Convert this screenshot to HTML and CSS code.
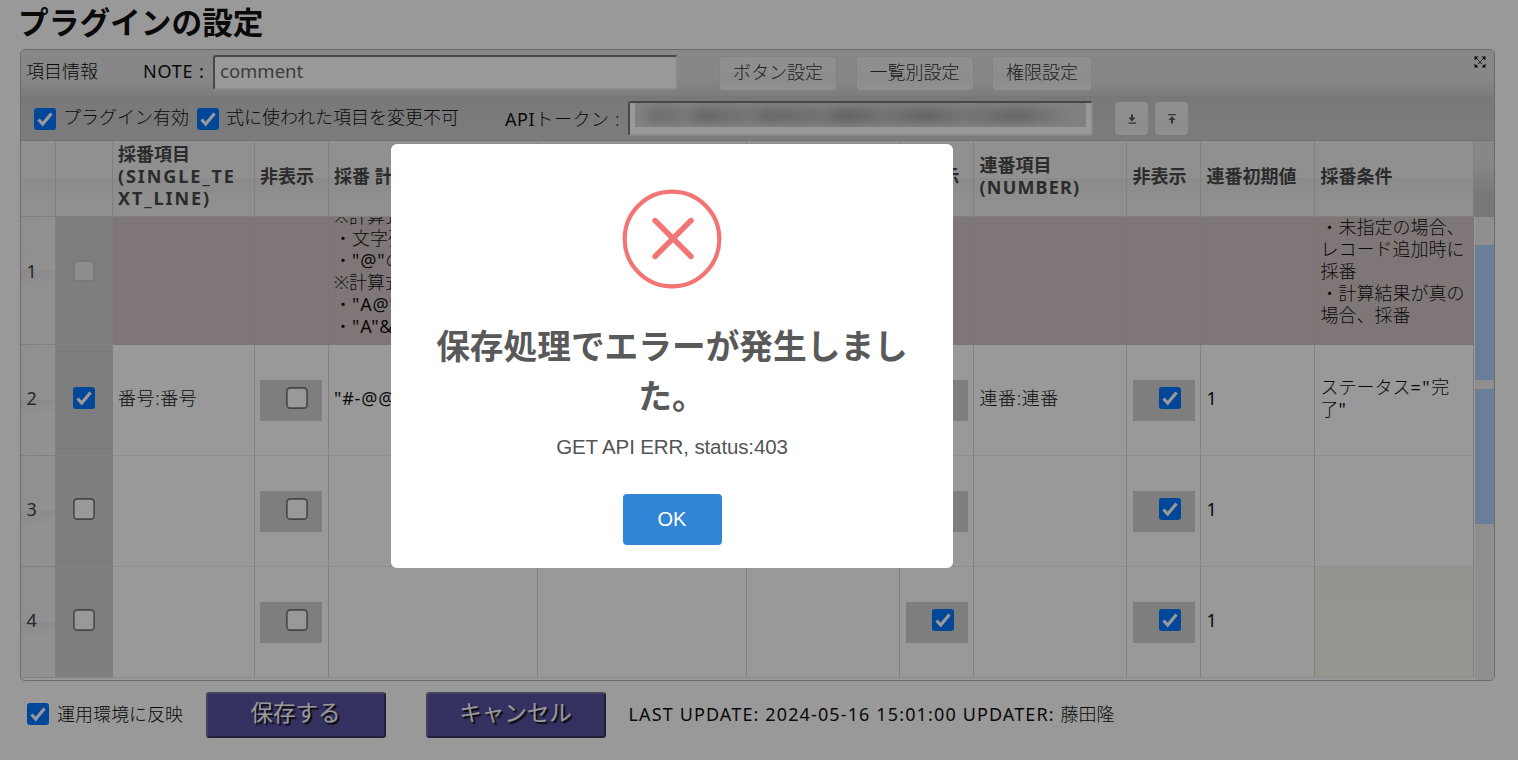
FILE: index.html
```html
<!DOCTYPE html>
<html lang="ja">
<head>
<meta charset="utf-8">
<title>プラグインの設定</title>
<link rel="stylesheet" href="styles.css">
</head>
<body>
<svg class="defs" width="0" height="0">
  <symbol id="on" viewBox="0 0 22 22"><rect width="22" height="22" rx="3" fill="#0075ff"/><path d="M4.500 11.500 8.700 16 17.500 5.500" fill="none" stroke="#fff" stroke-width="3.200"/></symbol>
  <symbol id="off" viewBox="0 0 22 22"><rect x=".9" y=".9" width="20.200" height="20.200" rx="3.400" fill="#fff" stroke="#767676" stroke-width="1.600"/></symbol>
  <symbol id="dis" viewBox="0 0 22 22"><rect x=".9" y=".9" width="20.200" height="20.200" rx="3.400" fill="#e9e9e9" stroke="#c4c4c4" stroke-width="1.600"/></symbol>
</svg>
<main class="page">
  <h1 class="title">プラグインの設定</h1>
  <section class="panel">
    <div class="bar bar-top">
      <span class="info">項目情報</span>
      <span class="note">NOTE :</span>
      <div class="input">comment</div>
      <div class="buttons">
        <div class="btn">ボタン設定</div>
        <div class="btn">一覧別設定</div>
        <div class="btn btn-s">権限設定</div>
      </div>
      <svg class="expand" width="12" height="12" viewBox="0 0 12 12"><path d="M.5.5h4L.5 4.500zM11.500.5v4l-4-4zM.5 11.500v-4l4 4zM11.500 11.500h-4l4-4z" fill="#111"/><path d="M2 2l8 8M10 2l-8 8" stroke="#222" stroke-width="1" stroke-dasharray="3.600 1.200"/></svg>
    </div>
    <div class="bar bar-sub">
      <svg class="cb"><use href="#on"/></svg><span class="opt1">プラグイン有効</span>
      <svg class="cb"><use href="#on"/></svg><span class="opt2">式に使われた項目を変更不可</span>
      <span class="api"><span class="reg">API</span>トークン :</span>
      <div class="input"><div class="mask"><div class="smear"></div></div></div>
      <div class="icon-btn"><svg width="12" height="12" viewBox="0 0 12 12"><path d="M5 1.500h2v3h2.500L6 8.500 2.500 4.500H5zM2.500 9.500h7.500v1.200H2.500z" fill="#555"/></svg></div>
      <div class="icon-btn"><svg width="12" height="12" viewBox="0 0 12 12"><path d="M5 10.500h2v-3.500h2.500L6 3.200 2.500 7H5zM2.300 1h7.500v1.200H2.300z" fill="#555"/></svg></div>
    </div>
    <div class="grid">
      <div class="sheet">
        <div class="row head">
          <div></div><div></div><div><p>採番項目<br><span class="latin">(SINGLE_TE<br>XT_LINE)</span></p></div><div>非表示</div><div>採番 計算式</div><div></div><div></div><div>非表示</div><div><p>連番項目<br><span class="latin num-type">(NUMBER)</span></p></div><div>非表示</div><div>連番初期値</div><div>採番条件</div>
        </div>
        <div class="clip">
          <div class="row guide">
            <div class="num">1</div><div class="chk"><svg class="cb"><use href="#dis"/></svg></div><div></div><div></div>
            <div><p>※計算式<br>・文字列<br>・<span class="reg code">"@"</span>の<br>※計算式<br>・<span class="reg code">"A@"</span><br>・<span class="reg code">"A"&amp;</span></p></div>
            <div></div><div></div><div></div><div></div><div></div><div></div>
            <div>・未指定の場合、<br>レコード追加時に<br>採番<br>・計算結果が真の<br>場合、採番</div>
          </div>
        </div>
        <div class="row">
          <div class="num">2</div><div class="chk"><svg class="cb"><use href="#on"/></svg></div><div class="pair">番号:番号</div><div><span class="box"><svg class="cb"><use href="#off"/></svg></span></div>
          <div class="reg code">"#-@@"</div><div></div><div></div><div><span class="box"></span></div><div class="pair">連番:連番</div><div><span class="box"><svg class="cb"><use href="#on"/></svg></span></div><div class="reg">1</div><div><p>ステータス<span class="reg eq">="</span>完<br>了<span class="reg">"</span></p></div>
        </div>
        <div class="row">
          <div class="num">3</div><div class="chk"><svg class="cb"><use href="#off"/></svg></div><div></div><div><span class="box"><svg class="cb"><use href="#off"/></svg></span></div>
          <div></div><div></div><div></div><div><span class="box"></span></div><div></div><div><span class="box"><svg class="cb"><use href="#on"/></svg></span></div><div class="reg">1</div><div></div>
        </div>
        <div class="row">
          <div class="num">4</div><div class="chk"><svg class="cb"><use href="#off"/></svg></div><div></div><div><span class="box"><svg class="cb"><use href="#off"/></svg></span></div>
          <div></div><div></div><div></div><div><span class="box"><svg class="cb"><use href="#on"/></svg></span></div><div></div><div><span class="box"><svg class="cb"><use href="#on"/></svg></span></div><div class="reg">1</div><div class="hint"></div>
        </div>
      </div>
      <div class="scroll"><div class="scroll-head"></div><div class="track"><div class="thumb"></div><div class="thumb"></div></div></div>
    </div>
  </section>
  <footer class="foot">
    <svg class="cb"><use href="#on"/></svg><span class="deploy">運用環境に反映</span>
    <div class="action">保存する</div>
    <div class="action">キャンセル</div>
    <span class="stamp">LAST UPDATE: 2024-05-16 15:01:00 UPDATER: <span class="who">藤田隆</span></span>
  </footer>
</main>
<div class="shade">
  <div class="modal">
    <svg class="error" width="100" height="100" viewBox="0 0 100 100"><circle cx="50" cy="50" r="47.300" fill="none" stroke="#f27474" stroke-width="4.200"/><path d="M33 31.500 69 67.500M69 31.500 33 67.500" stroke="#f27474" stroke-width="5.400" stroke-linecap="round"/></svg>
    <h2 class="modal-title">保存処理でエラーが発生しまし<br>た。</h2>
    <p class="modal-text">GET API ERR, status:403</p>
    <div class="ok">OK</div>
  </div>
</div>
</body>
</html>
```
FILE: styles.css
```css
* { box-sizing: border-box; }
body {
  margin: 0;
  width: 1518px;
  height: 760px;
  overflow: hidden;
  background: #fff;
  color: #111;
  font: 300 18px/22px "Noto Sans", "Noto Sans CJK JP", sans-serif;
  white-space: nowrap;
}
p { margin: 0; }
.defs { position: absolute; }
.reg { font-weight: 400; }
.page { padding: 0 23px 0 20px; height: 760px; }
.title { margin: 0; height: 49px; padding-top: 2px; font-size: 30.700px; line-height: 40px; color: #111; margin-left: -2px; }
.cb { width: 22px; height: 22px; flex: none; display: block; }

.panel { height: 632px; border: 1px solid #b2b2b2; border-radius: 5px; overflow: hidden; }
.bar { display: flex; align-items: center; }
.bar-top { height: 47px; background: linear-gradient(#e2e2e2 60%, #cfcfcf); border-bottom: 1px solid #c6c6c6; padding: 0 8px 2px 5px; }
.bar-sub { height: 44px; background: linear-gradient(#c9c9c9, #cfcfcf); border-bottom: 1px solid #bcbcbc; padding-left: 13px; }
.info { width: 117px; }
.note { width: 70px; letter-spacing: .8px; font-weight: 400; }
.bar-top span { margin-top: -2px; }
.input {
  width: 465px; height: 35px; flex: none;
  background: #fff; border: 2px solid; border-color: #777 #e6e6e6 #e6e6e6 #777; border-radius: 3px;
  padding: 3px 5px; color: #666; font-size: 18.500px; font-weight: 400;
}
.buttons { display: flex; gap: 18.500px; margin-left: 41px; margin-top: 2px; }
.btn {
  width: 118px; height: 35px; border: 1px solid #dadada; border-radius: 4px; text-align: center; line-height: 31px; color: #333;
  background: linear-gradient(#efefef 50%, #e8e8e8 50%, #f0f0f0);
}
.btn-s { width: 100px; }
.expand { margin: -20px 0 0 auto; }
.opt1 { width: 134px; padding-left: 7px; }
.opt1 + .cb { margin-left: 7px; }
.opt2 { width: 285px; padding-left: 7px; }
.opt1, .opt2 { padding-bottom: 3px; }
.api { width: 124px; padding-left: 1px; letter-spacing: .6px; }
.bar-sub .input { padding: 0 5px; margin-right: 22px; }
.mask { height: 24px; overflow: hidden; background: #d8d8d8; }
.smear {
  width: 440px; height: 15px; margin-top: 5px; filter: blur(4px);
  background: linear-gradient(90deg, #ddd, #b4b4b4 5%, #c8c8c8 12%, #aaa 15%, #c4c4c4 26%, #adadad 30%, #bdbdbd 43%, #a2a2a2 48%, #bebebe 57%, #a6a6a6 66%, #c2c2c2 75%, #a9a9a9 87%, #d4dad8);
}
.icon-btn {
  width: 33px; height: 33px; margin-right: 7px; border-radius: 4px; display: grid; place-items: center;
  background: linear-gradient(#efefef 50%, #e8e8e8 50%, #f1f1f1);
}

.grid { display: flex; margin-left: -1px; }
.sheet { width: 1454px; flex: none; }
.row { display: grid; grid-template-columns: 35.500px 57px 142px 74px 209px 209.500px 153px 74px 153px 74px 114px 159px; height: 111px; }
.row > div {
  display: flex; align-items: center; padding: 0 0 5px 5.500px; overflow: hidden;
  border-right: 1px solid #d8d8d8; border-bottom: 1px solid #ececec;
}
.head { height: 76px; font-weight: 700; color: #484848; }
.row.head > div { padding-bottom: 6px; background: linear-gradient(#f0f0f0 50%, #e8e8e8 50%, #f1f1f1 85%); border-color: #d6d6d6; }
.latin { letter-spacing: 1.900px; }
.num-type { letter-spacing: 1.200px; }
.clip { height: 128px; overflow: hidden; }
.guide { height: 148px; margin-top: -20px; }
.row.guide > div { background: #d4c7c6; border-color: #cdc4c4; padding-bottom: 0; }
.row > .num, .row.guide > .num { background: linear-gradient(90deg, transparent, rgba(255,255,255,.25)), linear-gradient(#efefef 50%, #e4e4e4 50%, #f1f1f1 64%); color: #444; border-color: #d8d8d8; padding-left: 6.500px; font-weight: 400; }
.row > .chk, .row.guide > .chk { background: #d2d2d2; justify-content: center; padding-left: 0; border-color: #d2d2d2 #d2d2d2 #dcdcdc; }
.pair { letter-spacing: .6px; }
.eq { letter-spacing: 1.500px; }
.code { letter-spacing: .8px; }
.box { width: 62px; height: 41px; background: #d2d2d2; display: block; flex: none; padding: 7px 0 0 26px; transform: translateY(3px); }
.row > .hint { background: linear-gradient(#f8f9ee, #fcf9ee); }
.scroll { width: 20px; }
.scroll-head { height: 76px; background: linear-gradient(#e2e2e2 30%, #c8c8c8 70%); }
.track { height: 463px; padding-top: 28px; background: #eee; margin-left: 1px; }
.thumb { height: 135px; background: #b4d0ff; }
.thumb + .thumb { margin-top: 9px; }

.foot { display: flex; align-items: center; height: 66px; padding-left: 7px; }
.deploy { width: 156.500px; padding-left: 8px; }
.action {
  width: 180px; height: 46px; margin: 2px 40px 0 0; border: 2px solid; border-color: #75759f #39365e #39365e #6e6e9f; border-radius: 3px;
  background: #5750a0; color: #fff; font-size: 22.500px; line-height: 38px; text-align: center; text-shadow: 2px 2px 1px #111; font-weight: 400;
}
.action + .action { margin-right: 23px; }
.stamp { letter-spacing: 1.130px; font-weight: 400; }
.who { letter-spacing: 0; font-weight: 300; }

.shade { position: absolute; inset: 0; background: rgba(0, 0, 0, .4); }
.modal {
  position: absolute; left: 391px; top: 144px; width: 562px; height: 424px; border-radius: 6px; background: #fff;
  display: flex; flex-direction: column; align-items: center;
}
.error { margin-top: 45px; flex: none; }
.modal-title { margin: 32px 0 0; font-size: 33.700px; line-height: 50px; text-align: center; color: #595959; }
.modal-text { margin: 13px 0 0; font: 20.500px/26px "Liberation Sans", sans-serif; letter-spacing: -.12px; color: #545454; }
.ok { width: 99px; height: 51px; margin-top: 34px; border-radius: 4px; background: #3085d6; color: #fff; font: 20px/51px "Liberation Sans", sans-serif; text-align: center; }
```
